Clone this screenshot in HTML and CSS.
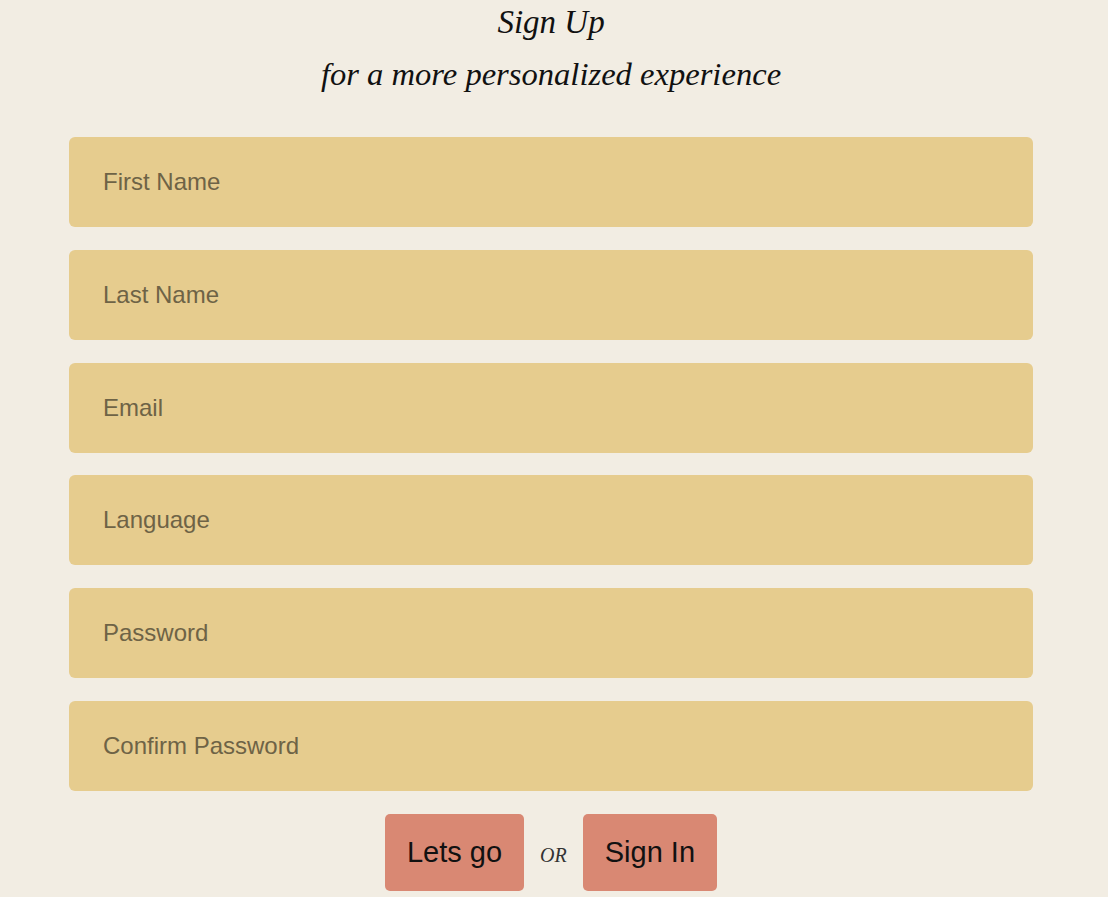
FILE: index.html
```html
<!DOCTYPE html>
<html>
<head>
<meta charset="utf-8">
<link rel="stylesheet" href="styles.css">
</head>
<body>
<div class="page">
  <header class="heading">
    <h1 class="title">Sign Up</h1>
    <h2 class="subtitle">for a more personalized experience</h2>
  </header>
  <form class="form">
    <input class="field" type="text" placeholder="First Name">
    <input class="field" type="text" placeholder="Last Name">
    <input class="field" type="email" placeholder="Email">
    <input class="field" type="text" placeholder="Language">
    <input class="field" type="password" placeholder="Password">
    <input class="field" type="password" placeholder="Confirm Password">
    <div class="actions">
      <button class="btn" type="button">Lets go</button>
      <span class="or">OR</span>
      <button class="btn" type="button">Sign In</button>
    </div>
  </form>
</div>
</body>
</html>
```

FILE: styles.css
```css
html, body {
  margin: 0;
  padding: 0;
  background: #f2ede3;
}
.page {
  padding: 0 75px 0 69px;
}
.heading {
  text-align: center;
  font-family: "Liberation Serif", serif;
  font-style: italic;
  color: #111;
}
.title {
  margin: 0;
  font-size: 33px;
  font-weight: normal;
  line-height: 44px;
}
.subtitle {
  margin: 8px 0 0;
  font-size: 32.6px;
  font-weight: normal;
  line-height: 44px;
}
.form {
  display: flex;
  flex-direction: column;
  gap: 22.8px;
  margin-top: 41px;
}
.field {
  box-sizing: border-box;
  width: 100%;
  height: 90px;
  border: none;
  border-radius: 6px;
  background: #e6cc8e;
  padding: 0 34px;
  font-family: "Liberation Sans", Arial, sans-serif;
  font-size: 24px;
  color: #333;
  outline: none;
}
.field::placeholder {
  color: #6e6346;
  opacity: 1;
}
.actions {
  display: flex;
  justify-content: center;
  align-items: center;
  gap: 16px;
}
.btn {
  height: 77px;
  padding: 0 22px;
  border: none;
  border-radius: 5px;
  background: #d98873;
  color: #111;
  font-family: "Liberation Sans", Arial, sans-serif;
  font-size: 29px;
}
.or {
  font-family: "Liberation Serif", serif;
  font-style: italic;
  font-size: 20px;
  color: #333;
  padding-top: 6px;
}
```
